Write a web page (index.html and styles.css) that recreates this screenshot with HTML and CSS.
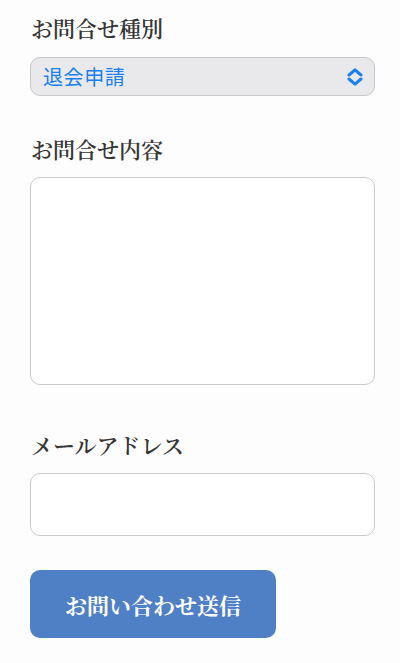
FILE: index.html
```html
<!DOCTYPE html>
<html lang="ja">
<head>
<meta charset="utf-8">
<title>お問合せ</title>
<link rel="stylesheet" href="styles.css">
</head>
<body>
<form class="form">
  <div class="field field-select">
    <label class="label">お問合せ種別</label>
    <div class="select">
      <span class="select-value">退会申請</span>
      <svg class="chevron" width="16" height="18" viewBox="0 0 16 18"><path d="M2 7 L8 1.8 L14 7 M2 11 L8 16.2 L14 11" fill="none" stroke="#1a7ff0" stroke-width="3" stroke-linecap="round" stroke-linejoin="round"/></svg>
    </div>
  </div>
  <div class="field field-textarea">
    <label class="label">お問合せ内容</label>
    <textarea class="textarea"></textarea>
  </div>
  <div class="field field-email">
    <label class="label">メールアドレス</label>
    <input class="input" type="email">
  </div>
  <button class="submit" type="button">お問い合わせ送信</button>
</form>
</body>
</html>
```
FILE: styles.css
```css
html, body {
  margin: 0;
  padding: 0;
  background: #fdfdfd;
}
.form {
  display: flex;
  flex-direction: column;
  align-items: flex-start;
  padding: 13px 25px 0 30px;
  font-family: "Noto Serif CJK JP", "Noto Sans CJK JP", serif;
}
.field {
  display: flex;
  flex-direction: column;
  align-self: stretch;
}
.field-select { margin-bottom: 38px; }
.field-textarea { margin-bottom: 45px; }
.field-email { margin-bottom: 34px; }
.label {
  font-size: 22px;
  line-height: 30px;
  font-weight: 600;
  color: #363636;
  margin-bottom: 14px;
  padding-left: 1px;
}
.field-textarea .label,
.field-email .label { margin-bottom: 13px; }
.select {
  box-sizing: border-box;
  height: 39px;
  border: 1.5px solid #c8c8ca;
  border-radius: 10px;
  background: #e9e9eb;
  display: flex;
  align-items: center;
  justify-content: space-between;
  padding: 0 11px 0 12px;
}
.select-value {
  font-family: "Noto Sans CJK JP", sans-serif;
  font-size: 20px;
  line-height: 1;
  color: #1a7ff0;
  letter-spacing: 0.6px;
}
.chevron { display: block; }
.textarea {
  box-sizing: border-box;
  height: 208px;
  border: 1.5px solid #cbcbcb;
  border-radius: 10px;
  background: #ffffff;
  resize: none;
  margin: 0;
}
.input {
  box-sizing: border-box;
  height: 63px;
  border: 1.5px solid #cbcbcb;
  border-radius: 10px;
  background: #ffffff;
  margin: 0;
}
.submit {
  box-sizing: border-box;
  width: 246px;
  height: 68px;
  border: none;
  border-radius: 10px;
  background: #4f80c5;
  color: #ffffff;
  font-family: "Noto Serif CJK JP", "Noto Sans CJK JP", serif;
  font-size: 22px;
  font-weight: 700;
  padding: 0;
  margin: 0;
}
```
